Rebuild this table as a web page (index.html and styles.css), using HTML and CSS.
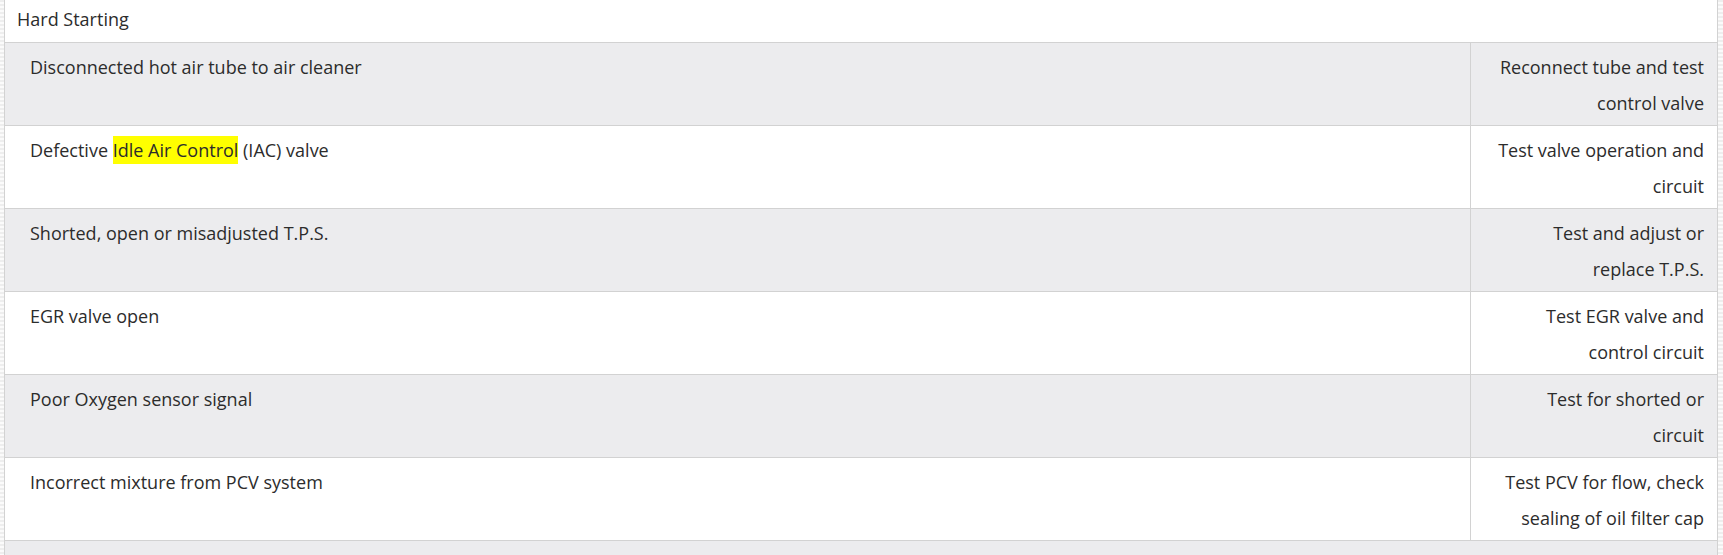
FILE: index.html
```html
<!DOCTYPE html>
<html lang="en">
<head>
<meta charset="utf-8">
<title>Hard Starting</title>
<link rel="stylesheet" href="styles.css">
</head>
<body>
<div class="panel">
  <div class="panel-title">Hard Starting</div>
  <table class="diag">
    <tbody>
      <tr class="alt">
        <td class="cause">Disconnected hot air tube to air cleaner</td>
        <td class="fix">Reconnect tube and test control valve</td>
      </tr>
      <tr>
        <td class="cause">Defective <mark class="hl">Idle Air Control</mark> (IAC) valve</td>
        <td class="fix">Test valve operation and circuit</td>
      </tr>
      <tr class="alt">
        <td class="cause">Shorted, open or misadjusted T.P.S.</td>
        <td class="fix">Test and adjust or replace T.P.S.</td>
      </tr>
      <tr>
        <td class="cause">EGR valve open</td>
        <td class="fix">Test EGR valve and control circuit</td>
      </tr>
      <tr class="alt">
        <td class="cause">Poor Oxygen sensor signal</td>
        <td class="fix">Test for shorted or circuit</td>
      </tr>
      <tr>
        <td class="cause">Incorrect mixture from PCV system</td>
        <td class="fix">Test PCV for flow, check sealing of oil filter cap</td>
      </tr>
    </tbody>
  </table>
  <div class="next-section"></div>
</div>
</body>
</html>
```
FILE: styles.css
```css
html, body {
  margin: 0;
  padding: 0;
  height: 555px;
  overflow: hidden;
}

body {
  padding: 0 5px 0 4px;
  background-color: #fbfbfb;
  background-image: repeating-linear-gradient(180deg, #eeeeee 0 2px, #fbfbfb 2px 4px);
  font-family: "Open Sans", "Noto Sans", sans-serif;
  font-size: 18px;
  color: #2c2c2c;
}

.panel {
  background: #ffffff;
  border-left: 1px solid #d2d2d2;
  border-right: 1px solid #d2d2d2;
}

.panel-title {
  padding: 6px 12px 9px;
  line-height: 27px;
  border-bottom: 1px solid #d2d2d2;
}

.diag {
  width: 100%;
  border-collapse: separate;
  border-spacing: 0;
  table-layout: fixed;
}

.diag td {
  vertical-align: top;
  line-height: 36px;
  padding-top: 6px;
  padding-bottom: 4px;
  border-bottom: 1px solid #d2d2d2;
}

.diag tr.alt td {
  background: #ececee;
}

.diag .cause {
  padding-left: 25px;
  padding-right: 12px;
  border-right: 1px solid #d2d2d2;
}

.diag .fix {
  width: 208px;
  padding-left: 25px;
  padding-right: 13px;
  text-align: right;
}

.hl {
  background: #ffff00;
  color: inherit;
  padding: 2px 0;
}

.next-section {
  height: 14px;
  background: #ececee;
}
```
